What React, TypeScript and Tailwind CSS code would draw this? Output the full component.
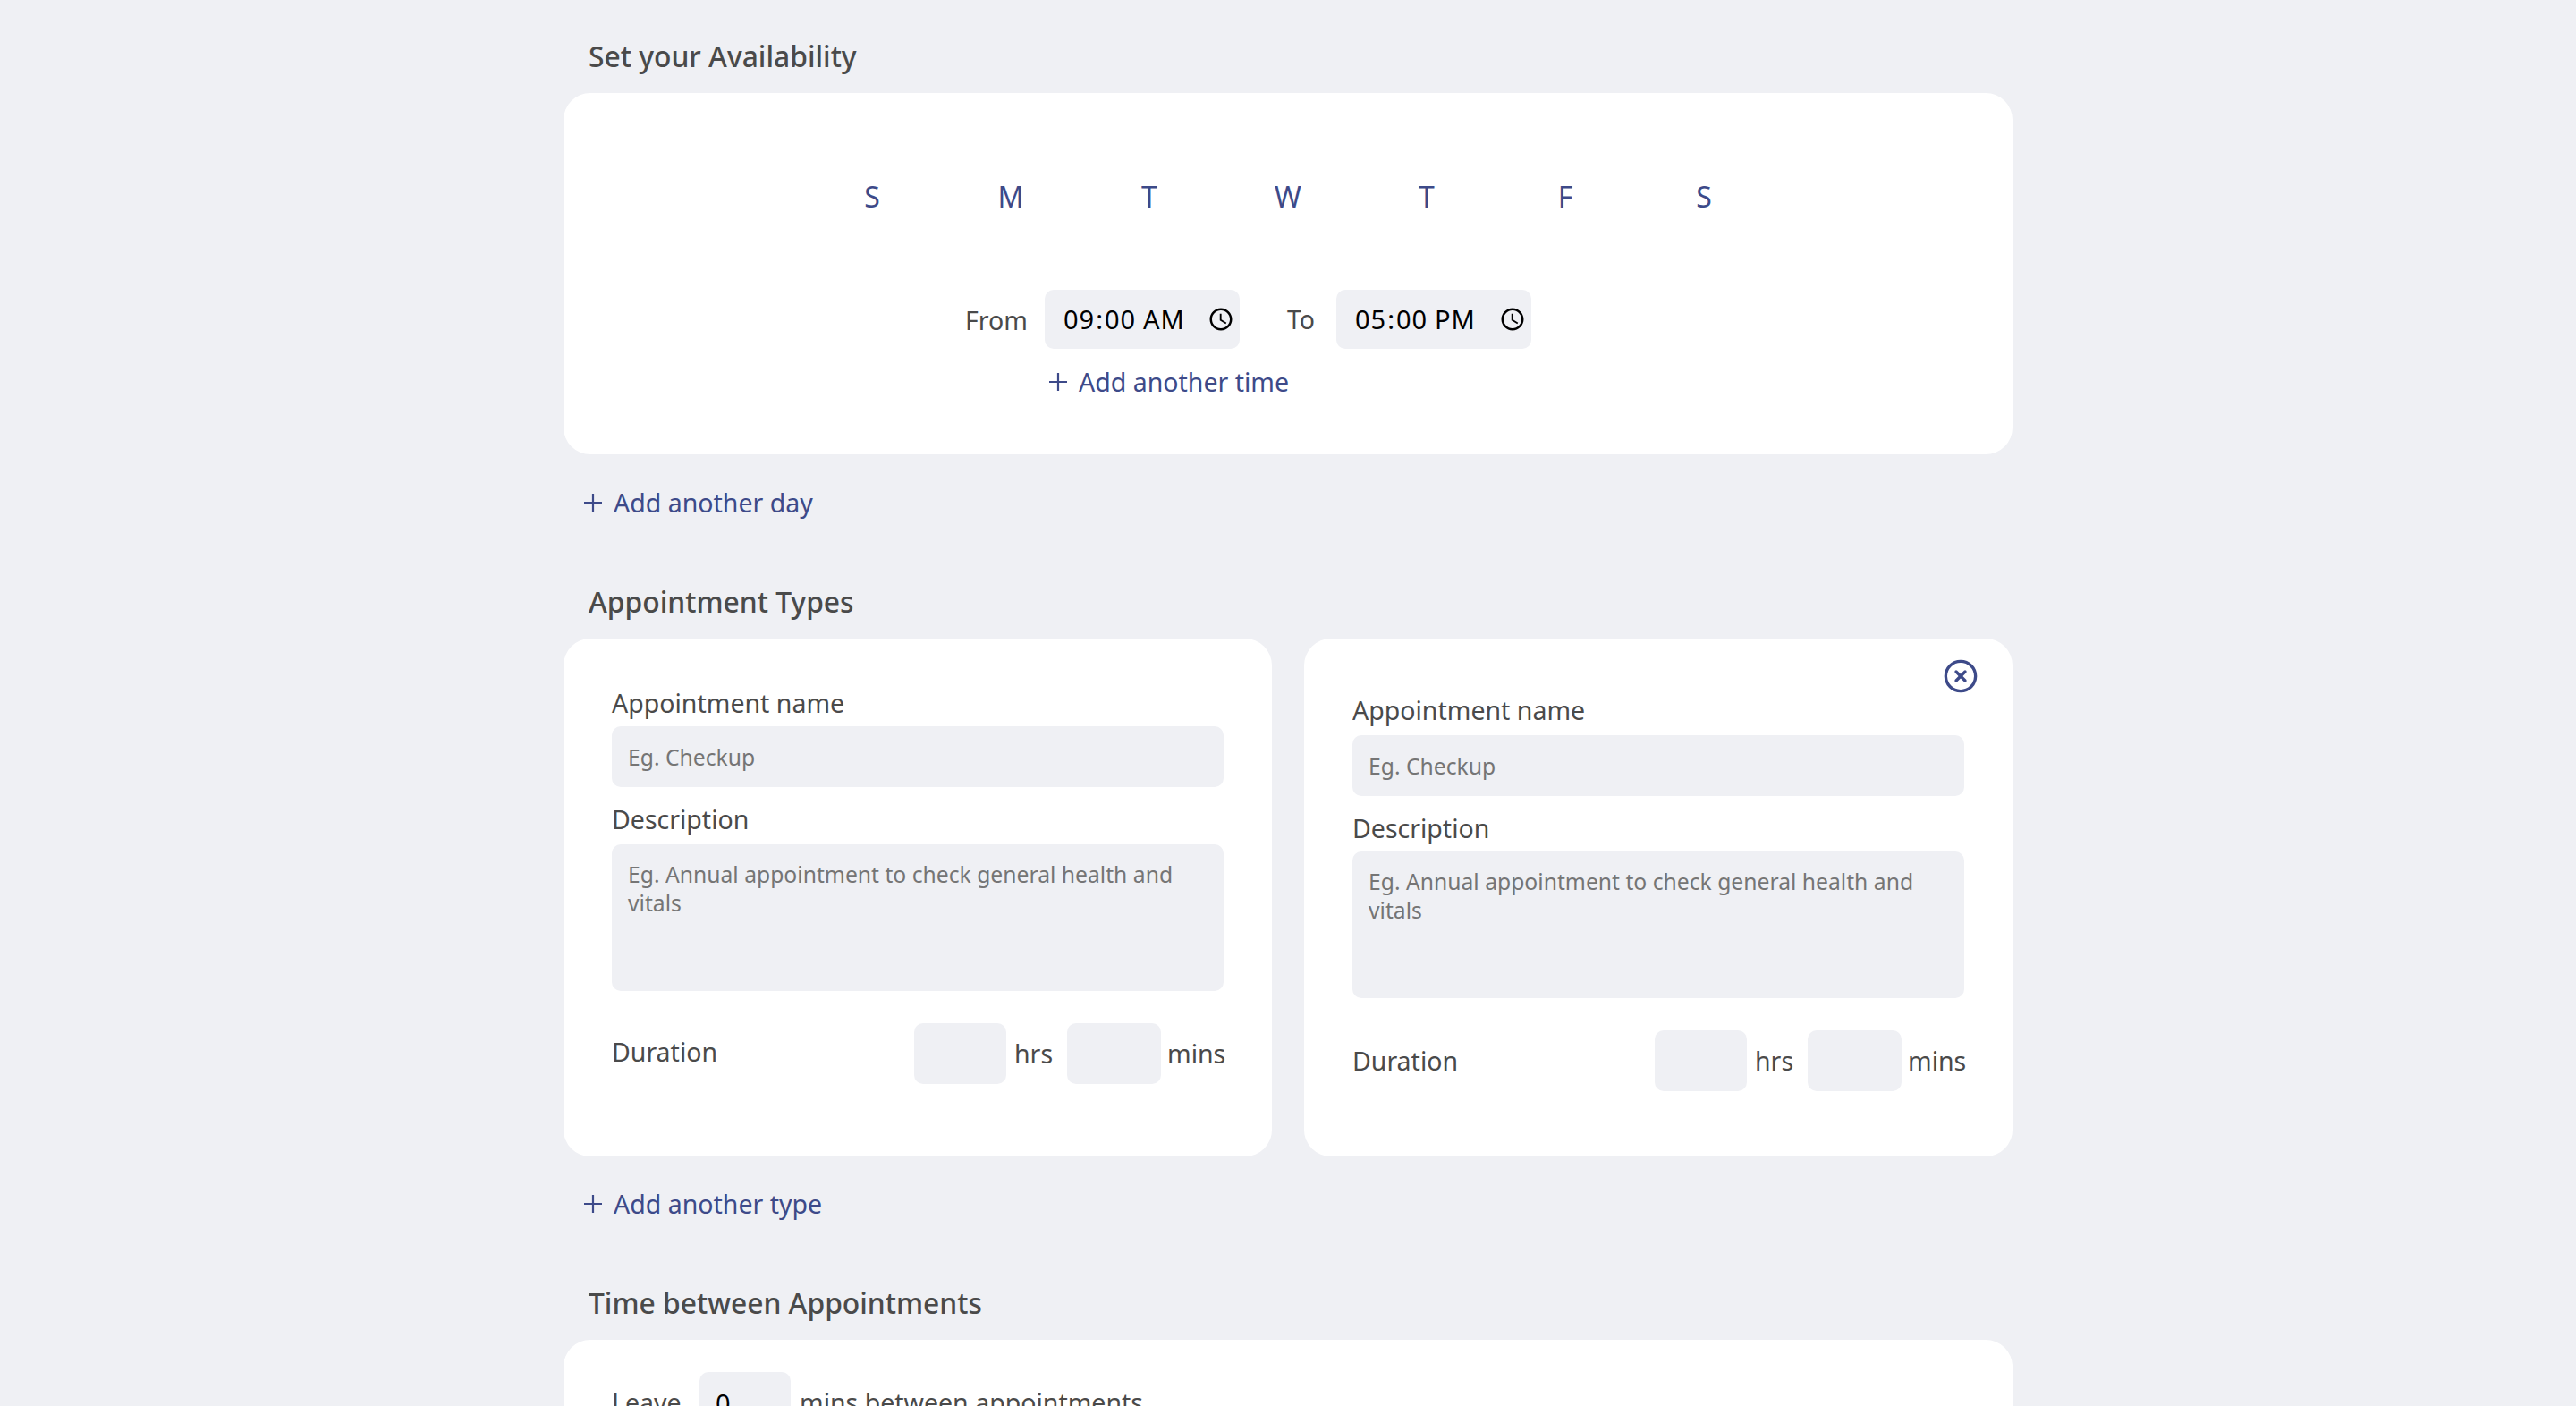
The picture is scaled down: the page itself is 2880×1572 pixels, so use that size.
import React from "react";
import { CircleX } from "lucide-react";

const days = ["S", "M", "T", "W", "T", "F", "S"];

const fieldBg = "bg-[#eff0f4] rounded-[10px] outline-none";
const placeholder = "placeholder:text-[#757575] text-[24.7px] leading-[32px]";

const PlusIcon = () => (
  <svg width="22" height="22" viewBox="0 0 22 22" fill="none" stroke="#3d4a89" strokeWidth="2.2" className="shrink-0">
    <path d="M11 1v20M1 11h20" />
  </svg>
);

const AddLink = ({ label, className }: { label: string; className: string }) => (
  <div className={`flex items-center gap-3 h-10 text-[28.5px] text-[#3d4a89] ${className}`}>
    <PlusIcon />
    <span>{label}</span>
  </div>
);

const Heading = ({ children, className }: { children: React.ReactNode; className: string }) => (
  <h2 className={`h-10 leading-10 pl-[28px] text-[31.8px] font-medium text-[#4a4a4a] ${className}`}>{children}</h2>
);

const TimeField = ({ value }: { value: string }) => (
  <input
    type="time"
    defaultValue={value}
    className={`${fieldBg} w-[218px] h-[66px] pl-5 pr-[6px] text-[29px] tracking-[1px] text-black [&::-webkit-calendar-picker-indicator]:w-[30px] [&::-webkit-calendar-picker-indicator]:h-[30px] [&::-webkit-calendar-picker-indicator]:m-0 [&::-webkit-calendar-picker-indicator]:p-0 [&::-webkit-calendar-picker-indicator]:brightness-0`}
  />
);

const AppointmentCard = ({ removable }: { removable?: boolean }) => (
  <div className={`relative bg-white rounded-[30px] h-[579px] pl-[54px] pr-[54px] text-[#4a4a4a] text-[28.5px] ${removable ? "pt-[62px]" : "pt-[54px]"}`}>
    {removable && (
      <CircleX size={40} strokeWidth={2} color="#3d4a89" className="absolute top-[22px] right-[38px]" />
    )}
    <div className="leading-9 h-9">Appointment name</div>
    <input
      placeholder="Eg. Checkup"
      className={`${fieldBg} ${placeholder} block w-full h-[68px] px-[18px] ${removable ? "mt-[10px]" : "mt-2"}`}
    />
    <div className="leading-9 h-9 mt-[18px]">Description</div>
    <textarea
      placeholder="Eg. Annual appointment to check general health and vitals"
      className={`${fieldBg} ${placeholder} block w-full h-[164px] px-[18px] py-[18px] resize-none ${removable ? "mt-2" : "mt-[10px]"}`}
    />
    <div className="flex items-center h-[68px] mt-9">
      <span className={`flex-1 ${removable ? "" : "mb-[3px]"}`}>Duration</span>
      <input className={`${fieldBg} w-[103px] h-[68px]`} />
      <span className="w-[42px] ml-[9px] mr-[17px]">hrs</span>
      <input className={`${fieldBg} w-[105px] h-[68px]`} />
      <span className="w-[63px] ml-[7px] whitespace-nowrap">mins</span>
    </div>
  </div>
);

export default function App() {
  return (
    <div className="h-screen overflow-hidden bg-[#eff0f4] font-['Noto_Sans',sans-serif]">
      <div className="w-[1620px] ml-[630px] pt-[43px]">
        <Heading className="mb-[21px]">Set your Availability</Heading>
        <div className="bg-white rounded-[30px] h-[404px] pt-20">
          <div className="flex justify-center gap-[83px]">
            {days.map((d, i) => (
              <div key={i} className="w-[72px] h-[72px] flex items-center justify-center text-[32px] text-[#3d4a89]">
                {d}
              </div>
            ))}
          </div>
          <div className="flex items-center mt-[68px] pl-[449px] text-[28.5px] text-[#4a4a4a]">
            <span className="w-[66px] mr-[23px] mt-[2px]">From</span>
            <TimeField value="09:00" />
            <span className="w-[30px] ml-[53px] mr-[25px]">To</span>
            <TimeField value="17:00" />
          </div>
          <AddLink label="Add another time" className="mt-[17px] pl-[542px]" />
        </div>
        <AddLink label="Add another day" className="mt-[34px] pl-[22px]" />

        <Heading className="mt-[71px] mb-[21px]">Appointment Types</Heading>
        <div className="grid grid-cols-2 gap-9">
          <AppointmentCard />
          <AppointmentCard removable />
        </div>
        <AddLink label="Add another type" className="mt-[33px] pl-[22px]" />

        <Heading className="mt-[71px] mb-[21px]">Time between Appointments</Heading>
        <div className="bg-white rounded-[30px] h-[200px] pt-9 pl-[54px] text-[28.5px] text-[#4a4a4a]">
          <div className="flex items-center">
            <span className="w-[98px]">Leave</span>
            <input defaultValue="0" className={`${fieldBg} w-[102px] h-[68px] px-[18px] text-[29px] text-black`} />
            <span className="ml-[10px]">mins between appointments</span>
          </div>
        </div>
      </div>
    </div>
  );
}
